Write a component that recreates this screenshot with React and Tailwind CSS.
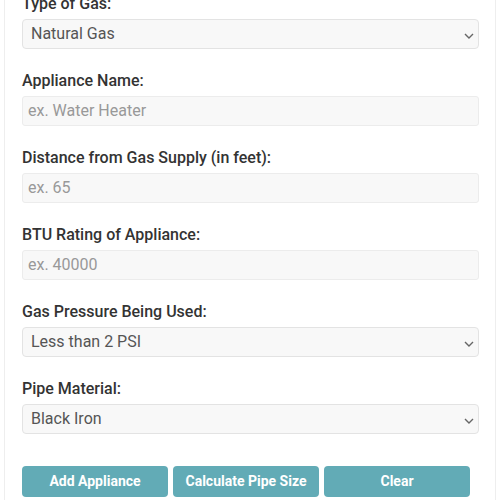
import React from "react";

function SelectBox({ value }) {
  return (
    <div className="relative h-[30px] rounded-[4px] border border-[#e3e3e3] bg-[#f8f8f8] flex items-center pl-[8px] text-[16px] text-[#555]">
      {value}
      <svg width="10" height="6" viewBox="0 0 10 6" className="absolute right-[4px] top-[13px]">
        <path d="M1 1l4 4 4-4" fill="none" stroke="#666" strokeWidth="1.4" />
      </svg>
    </div>
  );
}

function InputBox({ placeholder }) {
  return (
    <div className="h-[30px] rounded-[3px] border border-[#ececec] bg-[#f8f8f8] flex items-center pl-[5px] text-[16px] text-[#999]">
      {placeholder}
    </div>
  );
}

function Field({ label, children }) {
  return (
    <div className="mb-[20px]">
      <div className="h-[24px] leading-[24px] mb-[3px] text-[16px] font-medium text-[#333]">{label}</div>
      {children}
    </div>
  );
}

export default function App() {
  return (
    <div className="w-[500px] h-[500px] overflow-hidden bg-white" style={{ fontFamily: "Roboto, 'Liberation Sans', sans-serif" }}>
      <div className="ml-[4px] w-[492px] h-[520px] border-l border-r border-[#eeeeee] pl-[17px] pr-[16px] -mt-[8px]">
        <Field label="Type of Gas:">
          <SelectBox value="Natural Gas" />
        </Field>
        <Field label="Appliance Name:">
          <InputBox placeholder="ex. Water Heater" />
        </Field>
        <Field label="Distance from Gas Supply (in feet):">
          <InputBox placeholder="ex. 65" />
        </Field>
        <Field label="BTU Rating of Appliance:">
          <InputBox placeholder="ex. 40000" />
        </Field>
        <Field label="Gas Pressure Being Used:">
          <SelectBox value="Less than 2 PSI" />
        </Field>
        <Field label="Pipe Material:">
          <SelectBox value="Black Iron" />
        </Field>
        <div className="flex gap-[5px] mt-[32px]">
          <button className="w-[146px] h-[31px] rounded-[4px] bg-[#62abb6] text-white text-[14px] font-bold">Add Appliance</button>
          <button className="w-[146px] h-[31px] rounded-[4px] bg-[#62abb6] text-white text-[14px] font-bold">Calculate Pipe Size</button>
          <button className="w-[146px] h-[31px] rounded-[4px] bg-[#62abb6] text-white text-[14px] font-bold">Clear</button>
        </div>
      </div>
    </div>
  );
}
